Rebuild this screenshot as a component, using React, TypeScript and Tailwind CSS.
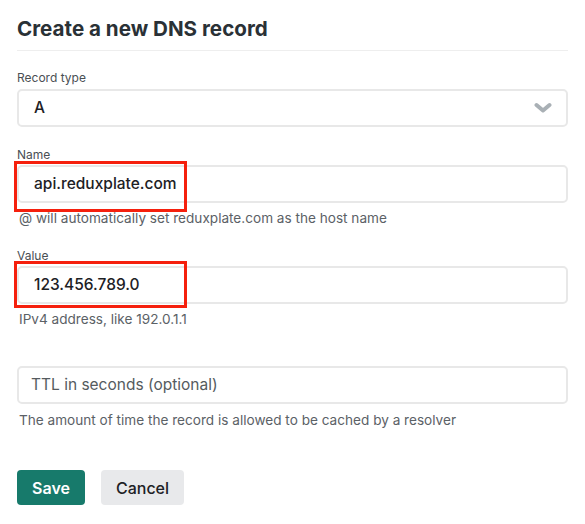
import React from 'react'

const font = { fontFamily: 'Inter, "Noto Sans", sans-serif' }

function Field({
  label,
  value,
  help,
  highlight,
}: {
  label: string
  value: string
  help: string
  highlight?: 'name' | 'value'
}) {
  return (
    <div>
      <label className="block text-xs leading-4 text-[#4a4f54]">{label}</label>
      <div className="relative mt-[2px]">
        <div className="h-[38px] rounded-[5px] border-2 border-[#e8e8e8] bg-white pl-[15px] flex items-center text-[15.5px] font-medium text-[#1d2125]">
          {value}
        </div>
        {highlight === 'name' && (
          <div className="absolute left-[-3px] top-[-4px] h-[51px] w-[173px] border-[3px] border-[#f5200d]" />
        )}
        {highlight === 'value' && (
          <div className="absolute left-[-3px] top-[-5px] h-[47px] w-[173px] border-[3px] border-[#f5200d]" />
        )}
      </div>
      <p className="mt-[6px] pl-[2px] text-[13.6px] leading-[18px] text-[#5b6166]">{help}</p>
    </div>
  )
}

export default function App() {
  return (
    <div className="w-[585px] h-[524px] bg-white pl-[17px] pt-[15px]" style={font}>
      <div className="w-[551px]">
        <h1 className="text-[20.6px] leading-7 font-bold text-[#2a3136]">Create a new DNS record</h1>
        <div className="mt-[7px] border-t border-[#eeeeee]" />

        <div className="mt-[19px]">
          <label className="block text-xs leading-4 text-[#4a4f54]">Record type</label>
          <div className="mt-[3px] h-[38px] rounded-[5px] border-2 border-[#e8e8e8] bg-white pl-[15px] pr-[14px] flex items-center justify-between text-[15.5px] font-medium text-[#1d2125]">
            <span>A</span>
            <svg width="18" height="12" viewBox="0 0 18 12">
              <polyline points="2.5,3 9,8.5 15.5,3" fill="none" stroke="#a9b0b5" strokeWidth="4" strokeLinecap="round" strokeLinejoin="round" />
            </svg>
          </div>
        </div>

        <div className="mt-5">
          <Field
            label="Name"
            value="api.reduxplate.com"
            help="@ will automatically set reduxplate.com as the host name"
            highlight="name"
          />
        </div>

        <div className="mt-[21px]">
          <Field label="Value" value="123.456.789.0" help="IPv4 address, like 192.0.1.1" highlight="value" />
        </div>

        <div className="mt-[38px]">
          <div className="h-[38px] rounded-[5px] border-2 border-[#e8e8e8] bg-white pl-[12px] flex items-center text-[15.5px] text-[#555b60]">
            TTL in seconds (optional)
          </div>
          <p className="mt-[7px] pl-[2px] text-[13.6px] leading-[18px] text-[#5b6166]">
            The amount of time the record is allowed to be cached by a resolver
          </p>
        </div>

        <div className="mt-[41px] flex gap-4">
          <button className="h-[35px] w-[68px] rounded-[4px] bg-[#177a6b] text-base font-semibold text-white">
            Save
          </button>
          <button className="h-[35px] w-[83px] rounded-[4px] bg-[#e8e9eb] text-base font-medium text-[#1d2125]">
            Cancel
          </button>
        </div>
      </div>
    </div>
  )
}
